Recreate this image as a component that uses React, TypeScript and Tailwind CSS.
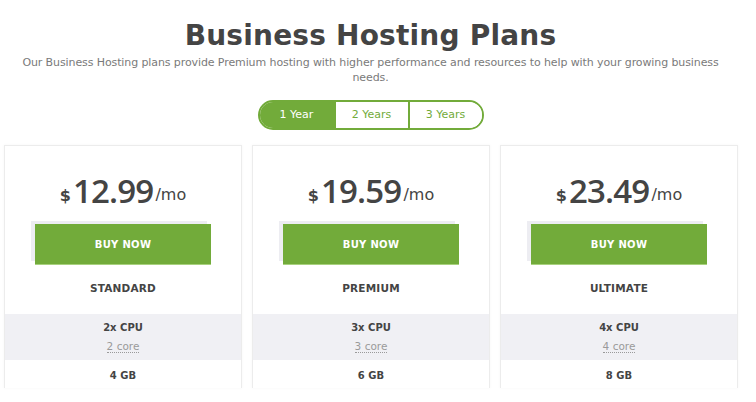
import { useState } from 'react';

interface IPlan {
  price: string;
  name: string;
  cpu: string;
  cores: string;
  ram: string;
}

const plans: IPlan[] = [
  { price: '12.99', name: 'STANDARD', cpu: '2x CPU', cores: '2 core', ram: '4 GB' },
  { price: '19.59', name: 'PREMIUM', cpu: '3x CPU', cores: '3 core', ram: '6 GB' },
  { price: '23.49', name: 'ULTIMATE', cpu: '4x CPU', cores: '4 core', ram: '8 GB' },
];

const periods = ['1 Year', '2 Years', '3 Years'];

export default function App() {
  const [period, setPeriod] = useState(0);

  return (
    <div
      className="w-[756px] h-[402px] overflow-hidden bg-white text-[#444]"
      style={{ fontFamily: '"DejaVu Sans", "Noto Sans", sans-serif' }}
    >
      <div className="w-[741px]">
        <div className="pt-[19px] text-center">
          <h1 className="text-[28px] leading-[34px] font-bold text-[#444] tracking-[0.2px]">Business Hosting Plans</h1>
          <p className="mt-[2px] mx-auto w-[712px] text-[11px] leading-[15px] text-[#7a7a7a] tracking-[-0.1px]">
            Our Business Hosting plans provide Premium hosting with higher performance and resources to help with your growing business needs.
          </p>
        </div>

        {/* period toggle */}
        <div className="mt-[15px] flex justify-center">
          <div className="flex h-[30px] rounded-full border-2 border-[#72ab3a] overflow-hidden">
            {periods.map((p, i) => (
              <button
                key={p}
                onClick={() => setPeriod(i)}
                className={`w-[74px] h-full text-[11px] ${i > 0 ? 'border-l-2 border-[#72ab3a]' : ''} ${
                  period === i ? 'bg-[#72ab3a] text-white' : 'bg-white text-[#72ab3a]'
                }`}
              >
                {p}
              </button>
            ))}
          </div>
        </div>

        {/* plans */}
        <div className="mt-[15px] pl-[4px] flex gap-[10px]">
          {plans.map(plan => (
            <div key={plan.name} className="w-[238px] h-[243px] border border-[#ececec] border-b-0 bg-white shadow-[0_0_3px_rgba(0,0,0,0.04)]">
              <div className="pt-[28px] flex items-end justify-center">
                <span className="text-[16px] leading-none font-semibold text-[#444] mb-[3px] mr-[2px]">$</span>
                <span
                  className="text-[33px] leading-none font-semibold text-[#444] tracking-[-0.8px]"
                  style={{ fontFamily: '"Open Sans", sans-serif' }}
                >
                  {plan.price}
                </span>
                <span className="text-[16px] leading-none text-[#444] mb-[4px] ml-[2px]">/mo</span>
              </div>
              <div className="mt-[17px] mx-auto w-[176px] relative">
                <div className="absolute -top-[3px] -left-[4px] w-[176px] h-[40px] bg-[#ededf2]" />
                <button className="relative w-[176px] h-[41px] bg-[#72ab3a] border-b border-[#a8d17e] text-white text-[10px] font-bold tracking-[0.3px]">
                  BUY NOW
                </button>
              </div>
              <div className="mt-[16px] text-center text-[10.5px] font-bold text-[#444] tracking-[0.2px]">{plan.name}</div>
              <div className="mt-[17px] h-[46px] bg-[#f0f0f4] flex flex-col items-center justify-center">
                <div className="text-[10px] font-bold text-[#444]">{plan.cpu}</div>
                <div className="mt-[5px] text-[10.5px] leading-[12px] text-[#9a9a9a] border-b border-dotted border-[#9a9a9a]">{plan.cores}</div>
              </div>
              <div className="pt-[8px] text-center text-[10px] font-bold text-[#444]">{plan.ram}</div>
            </div>
          ))}
        </div>
      </div>
    </div>
  );
}
